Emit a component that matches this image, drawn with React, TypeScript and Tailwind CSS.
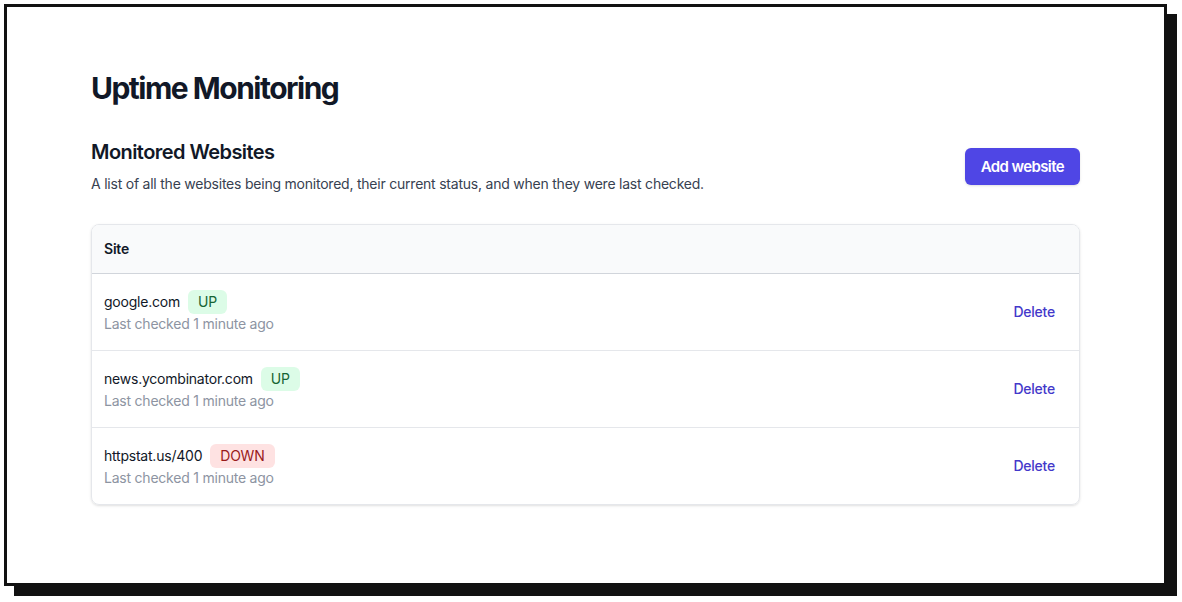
import React from "react"

interface Site {
  url: string
  up: boolean
  checked: string
}

const sites: Site[] = [
  { url: "google.com", up: true, checked: "Last checked 1 minute ago" },
  { url: "news.ycombinator.com", up: true, checked: "Last checked 1 minute ago" },
  { url: "httpstat.us/400", up: false, checked: "Last checked 1 minute ago" },
]

function StatusBadge({ up }: { up: boolean }) {
  return up ? (
    <span className="ml-2 inline-flex items-center rounded-md bg-[#dcfce7] px-2.5 py-0.5 text-sm leading-5 text-[#166534]">
      UP
    </span>
  ) : (
    <span className="ml-2 inline-flex items-center rounded-md bg-[#fee2e2] px-2.5 py-0.5 text-sm leading-5 text-[#991b1b]">
      DOWN
    </span>
  )
}

export default function App() {
  return (
    <div className="h-[602px] w-[1182px] bg-white p-1 font-['Inter',sans-serif] tracking-[-0.014em]">
      <div className="h-[582px] w-[1163px] border-[3px] border-[#111] bg-white shadow-[10px_10px_0_#111]">
        <div className="px-[84px] pt-[63px]">
          <h1 className="text-3xl font-bold tracking-[-0.05em] text-[#111827]">Uptime Monitoring</h1>

          {/* cabeçalho da lista */}
          <div className="mt-8 flex items-center">
            <div className="flex-1">
              <h2 className="text-xl font-semibold tracking-[-0.028em] text-[#111827]">Monitored Websites</h2>
              <p className="mt-2 text-sm text-[#374151]">
                A list of all the websites being monitored, their current status, and when they were last checked.
              </p>
            </div>
            <button className="rounded-md bg-[#4f46e5] px-4 py-2 text-[15px] leading-[21px] font-semibold tracking-[-0.04em] text-white shadow-sm">
              Add website
            </button>
          </div>

          {/* tabela */}
          <div className="mt-[30px] overflow-hidden rounded-lg border border-[#e5e7eb] shadow-sm">
            <div className="border-b border-[#d1d5db] bg-[#f9fafb] py-3.5 pl-3 text-sm font-semibold text-[#111827]">
              Site
            </div>
            {sites.map((site, i) => (
              <div
                key={site.url}
                className={
                  "flex items-center justify-between py-4 pr-6 pl-3 " +
                  (i > 0 ? "border-t border-[#e5e7eb]" : "")
                }
              >
                <div>
                  <div className="flex items-center text-sm text-[#111827]">
                    {site.url}
                    <StatusBadge up={site.up} />
                  </div>
                  <div className="text-sm text-[#8d94a2]">{site.checked}</div>
                </div>
                <button className="text-sm font-medium text-[#4338ca]">Delete</button>
              </div>
            ))}
          </div>
        </div>
      </div>
    </div>
  )
}
